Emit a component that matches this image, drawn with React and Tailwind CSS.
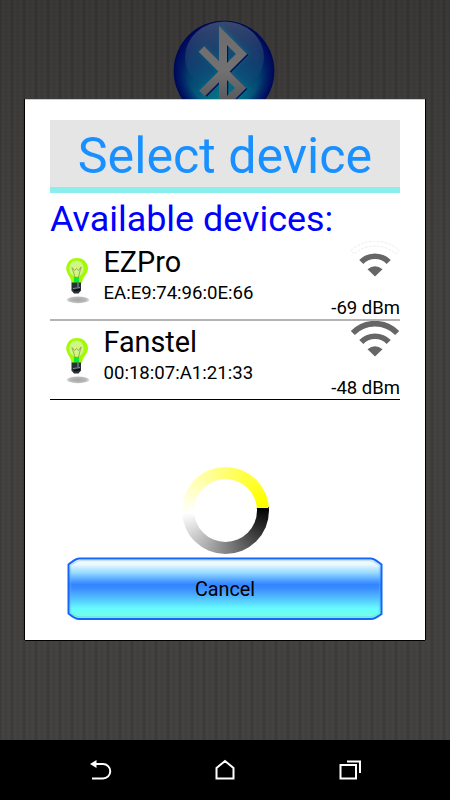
import React from 'react';

const devices = [
  { name: 'EZPro', mac: 'EA:E9:74:96:0E:66', rssi: -69, strong: false, line: 'border-b-2 border-[#b4b4b4] h-[80px]' },
  { name: 'Fanstel', mac: '00:18:07:A1:21:33', rssi: -48, strong: true, line: 'border-b border-black h-[79px]' },
];

const BluetoothLogo = () => (
  <svg width="102" height="102" viewBox="0 0 102 102">
    <defs>
      <radialGradient id="ball" cx="0.5" cy="0.85" r="0.8">
        <stop offset="0" stopColor="#087f87" />
        <stop offset="0.3" stopColor="#05607f" />
        <stop offset="0.6" stopColor="#033b6c" />
        <stop offset="1" stopColor="#011058" />
      </radialGradient>
      <radialGradient id="rim" cx="0.5" cy="0.5" r="0.5">
        <stop offset="0.72" stopColor="#000b60" stopOpacity="0" />
        <stop offset="0.93" stopColor="#000b60" stopOpacity="0.85" />
        <stop offset="1" stopColor="#00074f" />
      </radialGradient>
      <linearGradient id="shine" x1="0" y1="0" x2="0" y2="1">
        <stop offset="0" stopColor="#4c5d74" stopOpacity="0.75" />
        <stop offset="1" stopColor="#1a4f80" stopOpacity="0.05" />
      </linearGradient>
      <linearGradient id="rune" gradientUnits="userSpaceOnUse" x1="0" y1="6" x2="0" y2="95">
        <stop offset="0" stopColor="#6c6c6c" />
        <stop offset="0.5" stopColor="#727272" />
        <stop offset="1" stopColor="#4c4e54" />
      </linearGradient>
      <filter id="glow" x="-30%" y="-30%" width="160%" height="160%">
        <feGaussianBlur stdDeviation="2.2" />
      </filter>
    </defs>
    <circle cx="51" cy="51" r="50.3" fill="url(#ball)" />
    <circle cx="51" cy="51" r="50.3" fill="url(#rim)" />
    <ellipse cx="51.5" cy="37" rx="39.5" ry="35.5" fill="url(#shine)" />
    <g fill="none" strokeLinejoin="miter">
      <path d="M29 29 L69 69 L51.500 87 V15 L70 34 L30 74" stroke="#087888" strokeWidth="10" opacity="0.4" filter="url(#glow)" />
      <path d="M30 30 L69 69 L51.500 86.500 V16.500 L70 35 L31 74" stroke="#03145b" strokeWidth="7.500" />
      <path d="M28.500 29 L67.500 68 L50 85.500 V15.500 L68.500 34 L29 73.500" stroke="url(#rune)" strokeWidth="8" />
    </g>
  </svg>
);

const Bulb = () => (
  <svg width="24" height="48" viewBox="0 0 24 48">
    <defs>
      <radialGradient id="shadow">
        <stop offset="0" stopColor="#a6a6a6" />
        <stop offset="0.75" stopColor="#bababa" />
        <stop offset="1" stopColor="#e8e8e8" />
      </radialGradient>
    </defs>
    <ellipse cx="12" cy="42.800" rx="11.500" ry="3.600" fill="url(#shadow)" />
    <path d="M11 1 C4.500 1 .3 5.800 .3 11.500 C.3 17 5 19.500 5.500 26 H16 C16.500 19.500 22 17 22 11.500 C22 5.800 17.500 1 11 1Z" fill="#a2fb05" />
    <ellipse cx="10.500" cy="11.500" rx="7.300" ry="8" fill="#cdf980" />
    <path d="M9 20 L6 10.500 L8.500 13.500 L10.500 11.500 L12.500 13.500 L15 10 L12.500 20" fill="none" stroke="#a19b5c" strokeWidth="0.9" />
    <path d="M8 20 H13 V25.500 H8Z" fill="#08ec32" />
    <path d="M5.500 25.500 H15 V33.500 L12.500 36.500 H8 L5.500 33.500Z" fill="#253038" />
    <path d="M12 26 V30 M7 31.500 L14 30.500" stroke="#839398" strokeWidth="1.200" />
    <path d="M8 33.500 L14 32.500" stroke="#060a0d" strokeWidth="1.500" />
  </svg>
);

const Signal = ({ strong }) => (
  <svg width="50" height="36" viewBox="0 0 50 36">
    <g fill="none" stroke="#666666">
      {strong ? (
        <path d="M2.800 12 C15 -.5 35 -.5 47.200 12" strokeWidth="5.600" />
      ) : (
        <g stroke="#e6e6e6" strokeWidth="0.7" strokeDasharray="3 1">
          <path d="M.8 9.500 C15 -3 35 -3 49.200 9.500 L46 13 C34 2.300 16 2.300 4 13Z" />
        </g>
      )}
      <path d="M11.300 21 C18.500 13.300 31.500 13.300 38.700 21" strokeWidth="5.600" />
    </g>
    <path d="M17.500 28.300 Q25 22 32.500 28.300 L25 35.500Z" fill="#666666" />
  </svg>
);

const DeviceRow = ({ device }) => (
  <div className={`flex ${device.line}`}>
    <div className="w-[53.5px] pl-[15.5px] pt-[16px]">
      <Bulb />
    </div>
    <div className="flex-1">
      <div className="text-[28.8px] leading-[34px] pt-[3.5px]">{device.name}</div>
      <div className="text-[18.6px] leading-[22px] pt-[3px]">{device.mac}</div>
    </div>
    <div className="flex flex-col items-end">
      <Signal strong={device.strong} />
      <div className="text-[18.5px] leading-[22px] pt-[19.5px] whitespace-nowrap">{device.rssi} dBm</div>
    </div>
  </div>
);

const CancelButton = () => (
  <button className="relative mx-auto mt-[3px] block h-[64px] w-[316px] pt-[3px]">
    {/* bevelled glossy plate */}
    <svg className="absolute inset-0" width="316" height="64" viewBox="0 0 316 64">
      <defs>
        <linearGradient id="plate" x1="0" y1="0" x2="0" y2="1">
          <stop offset="0" stopColor="#ffffff" />
          <stop offset="0.1" stopColor="#e8f8ff" />
          <stop offset="0.24" stopColor="#94d9ff" />
          <stop offset="0.37" stopColor="#4b9dff" />
          <stop offset="0.43" stopColor="#3384ff" />
          <stop offset="0.5" stopColor="#3b8eff" />
          <stop offset="0.65" stopColor="#51bdff" />
          <stop offset="0.82" stopColor="#65faff" />
          <stop offset="1" stopColor="#78ffda" />
        </linearGradient>
      </defs>
      <path d="M12 1.500 H304 Q308 2 314.500 7.500 V57 Q308 62 304 62 H12 Q8 62 1.500 56.500 V7.500 Q8 2 12 1.500Z" fill="url(#plate)" />
      <path d="M13 3.500 H303 Q307 4 312.500 8.500 V56 Q307 60 303 60 H13 Q9 60 3.500 55.500 V8.500 Q9 4 13 3.500Z" fill="none" stroke="#6fb0ff" strokeWidth="1.500" opacity="0.35" />
      <path d="M12 1.500 H304 Q308 2 314.500 7.500 V57 Q308 62 304 62 H12 Q8 62 1.500 56.500 V7.500 Q8 2 12 1.500Z" fill="none" stroke="#1267f8" strokeWidth="2" />
    </svg>
    <span className="relative text-[19.8px] leading-[24px]">Cancel</span>
  </button>
);

const NavBar = () => (
  <div className="flex h-[60px] items-center justify-between bg-black px-[88px]">
    <svg width="24" height="24" viewBox="0 0 24 24" fill="none" stroke="white" strokeWidth="2">
      <path d="M5 6 H15 A7 7 0 0 1 15 20.500 H4" />
      <path d="M2 6 L8.500 2 V10Z" fill="white" stroke="none" />
    </svg>
    <svg width="24" height="24" viewBox="0 0 24 24" fill="none" stroke="white" strokeWidth="2">
      <path d="M3.500 20.500 V10 L12 3 L20.500 10 V20.500Z" />
    </svg>
    <svg width="24" height="24" viewBox="0 0 24 24" fill="none" stroke="white" strokeWidth="2">
      <path d="M2.500 7 H18 V20.500 H2.500Z M9 3.500 H22 V15" />
    </svg>
  </div>
);

const App = () => {
  return (
    <div className="relative flex h-[800px] w-[450px] flex-col overflow-hidden font-['Roboto',sans-serif] text-black">
      {/* dimmed fabric screen behind the dialog */}
      <div className="flex flex-1 justify-center bg-[#3e3d3b] bg-[repeating-linear-gradient(90deg,rgba(0,0,0,0.1)_0px,rgba(255,255,255,0.02)_3px,rgba(0,0,0,0.02)_6px,rgba(255,255,255,0.02)_9px,rgba(0,0,0,0.1)_12px),repeating-linear-gradient(0deg,rgba(0,0,0,0.04)_0px,transparent_2px,rgba(0,0,0,0.04)_4px),linear-gradient(180deg,#383735_0px,#42413f_250px,#42413f_740px)] pr-[3px] pt-[20px]">
        <BluetoothLogo />
      </div>
      <NavBar />

      {/* dialog */}
      <div className="absolute inset-x-0 top-0 flex justify-center pt-[99px]">
        <div className="h-[541px] w-[400px] border-t border-[#d0c8cb] bg-white px-[25px] pt-[20px] shadow-[-1px_0_0_#000,1px_0_0_#000,0_1px_0_#000]">
          <h1 className="h-[73px] border-b-[6px] border-[#8aeeed] bg-[#e5e5e5] text-center text-[50.2px] leading-[71px] text-[#1890ff]">
            Select device
          </h1>
          <h2 className="h-[48px] text-[35.9px] leading-[53px] text-[#0000ff]">Available devices:</h2>
          {devices.map((d) => (
            <DeviceRow key={d.mac} device={d} />
          ))}
          <div className="mx-auto mt-[66.5px] flex size-[87px] items-center justify-center rounded-full bg-[conic-gradient(from_86deg,#000_0deg,#fff_180deg,#ff0_350deg,#ff0_360deg)]">
            <div className="size-[63px] rounded-full bg-white" />
          </div>
          <CancelButton />
        </div>
      </div>
    </div>
  );
};

export default App;
